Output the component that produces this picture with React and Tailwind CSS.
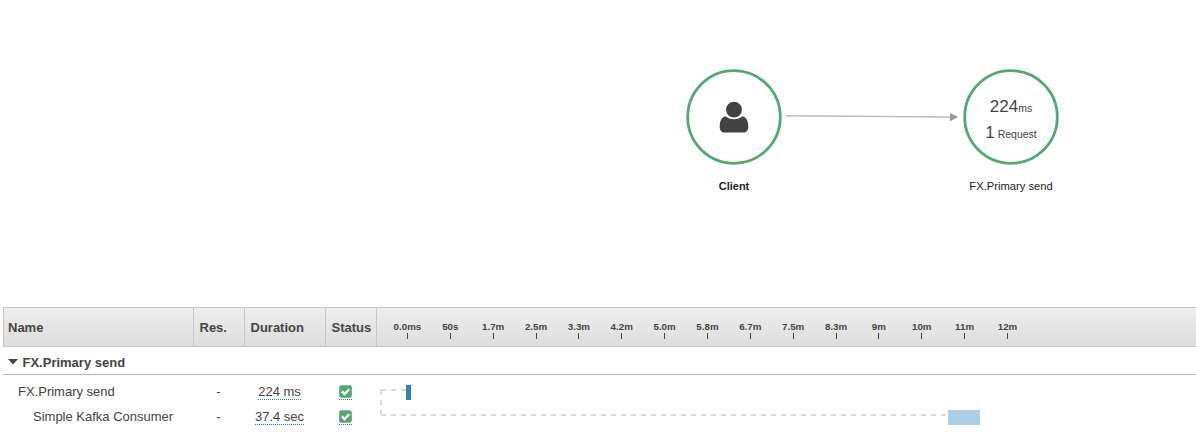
const ticks = [
  "0.0ms", "50s", "1.7m", "2.5m", "3.3m", "4.2m", "5.0m", "5.8m",
  "6.7m", "7.5m", "8.3m", "9m", "10m", "11m", "12m",
];

const spans = [
  { name: "FX.Primary send", indent: "pl-[15px]", res: "-", duration: "224 ms" },
  { name: "Simple Kafka Consumer", indent: "pl-[30px]", res: "-", duration: "37.4 sec" },
];

function CheckIcon() {
  return (
    <svg width="13" height="13" viewBox="0 0 13 13" className="block">
      <rect x="0.200" y="0.200" width="12.600" height="12.600" rx="2" fill="#54a973" />
      <path d="m2.900 6.400 2.600 2.600 4.700-4.700" fill="none" stroke="#fff" strokeWidth="2.300" />
    </svg>
  );
}

function Node({ label, bold, children }) {
  return (
    <div className="flex w-[96px] flex-col items-center">
      <div className="grid h-[96px] w-[96px] place-items-center">
        <svg width="96" height="96" viewBox="0 0 96 96" className="col-start-1 row-start-1">
          <circle cx="48" cy="48" r="46.300" fill="none" stroke="#54a973" strokeWidth="2.800" />
        </svg>
        <div className="col-start-1 row-start-1 flex flex-col items-center">{children}</div>
      </div>
      <span
        className={
          bold
            ? "mt-[13px] whitespace-nowrap text-[11px] leading-4 font-bold text-[#222]"
            : "mt-[13px] whitespace-nowrap text-[11.2px] leading-4 text-[#222]"
        }
      >
        {label}
      </span>
    </div>
  );
}

function ServiceMap() {
  return (
    <div className="flex h-[307px] items-start pt-[69px] pl-[686px]">
      <Node label="Client" bold>
        {/* user silhouette */}
        <svg width="30" height="32" viewBox="0 0 30 32" fill="#424242">
          <path d="M6.700 15.200C2.400 15.700.7 20.500.7 26c0 3.300 1.900 5.600 5 5.600h18.600c3.100 0 5-2.300 5-5.600 0-5.500-1.700-10.300-6-10.800-2 2-4.800 3-8.300 3s-6.300-1-8.300-3Z" />
          <circle cx="15" cy="8.600" r="7.900" />
        </svg>
      </Node>
      <svg width="181" height="96" viewBox="0 0 181 96" className="shrink-0">
        <path d="M4 46.700 168 48" stroke="#bdbdbd" strokeWidth="1.500" />
        <path d="M168 44v8.200l8.200-4.100Z" fill="#999" />
      </svg>
      <Node label="FX.Primary send">
        <div className="flex h-[26px] translate-y-[3px] items-baseline text-[#444]">
          <span className="text-[17px] leading-[26px]">224</span>
          <span className="text-[10.500px]">ms</span>
        </div>
        <div className="flex h-[26px] translate-y-[3px] items-baseline gap-[3px] text-[#444]">
          <span className="text-[17px] leading-[26px]">1</span>
          <span className="text-[10.500px]">Request</span>
        </div>
      </Node>
    </div>
  );
}

function TraceHeader() {
  return (
    <div className="grid h-10 grid-cols-[190px_51px_81px_51px_1fr] border-y border-l border-[#c6c6c6] bg-linear-to-b from-[#eee] to-[#dedede] text-[13px] leading-[39px] font-bold">
      <div className="mb-[3px] border-r border-[#c6c6c6] pl-1">Name</div>
      <div className="mb-[3px] border-r border-[#c6c6c6] pl-[5.500px]">Res.</div>
      <div className="mb-[3px] border-r border-[#c6c6c6] pl-[5.500px]">Duration</div>
      <div className="mb-[3px] border-r border-[#c6c6c6] pl-[5.500px]">Status</div>
      <div className="flex pt-[13px] pl-[9px]">
        {ticks.map((tick) => (
          <div key={tick} className="flex w-[42.86px] shrink-0 flex-col items-center">
            <span className="text-[9.75px] leading-3">{tick}</span>
            <span className="h-1.5 w-px bg-[#444]" />
          </div>
        ))}
      </div>
    </div>
  );
}

function Waterfall() {
  return (
    <svg width="818" height="50" viewBox="378 379 818 50" className="block">
      <g fill="none" stroke="#d9d9d9" strokeWidth="2" strokeDasharray="5 5">
        <path d="M381 390H406" />
        <path d="M381 390V415" />
        <path d="M381 415H948" />
      </g>
      <rect x="406" y="385" width="5" height="15" fill="#3182bd" />
      <rect x="948" y="410" width="32" height="15" fill="#abcfe6" />
    </svg>
  );
}

export default function App() {
  return (
    <div className="h-[445px] w-full overflow-hidden bg-white font-['Liberation_Sans',Arial,sans-serif] text-[#444]">
      <ServiceMap />
      <div className="ml-[3px]">
        <TraceHeader />
        <div className="flex h-7 items-center border-b border-[#b8b8b8] pt-1 text-[13px] font-bold">
          <svg width="10" height="6" viewBox="0 0 10 6" className="mr-[5px] mb-[2px] ml-[4.500px]" fill="#444">
            <path d="M0 0h10L5 5.500Z" />
          </svg>
          FX.Primary send
        </div>
        <div className="flex pt-1 text-[13px]">
          <div className="w-[375px] shrink-0">
            {spans.map((span) => (
              <div key={span.name} className="grid h-[25px] grid-cols-[190px_51px_71px_60px] items-center">
                <span className={span.indent}>{span.name}</span>
                <span className="text-center">{span.res}</span>
                <span className="text-center">
                  <span className="inline-block border-b border-dotted border-[#3182a0] leading-[15px]">{span.duration}</span>
                </span>
                <span className="flex justify-center">
                  <span className="mt-px border-b border-dotted border-[#3182a0] pb-px">
                    <CheckIcon />
                  </span>
                </span>
              </div>
            ))}
          </div>
          <Waterfall />
        </div>
      </div>
    </div>
  );
}
